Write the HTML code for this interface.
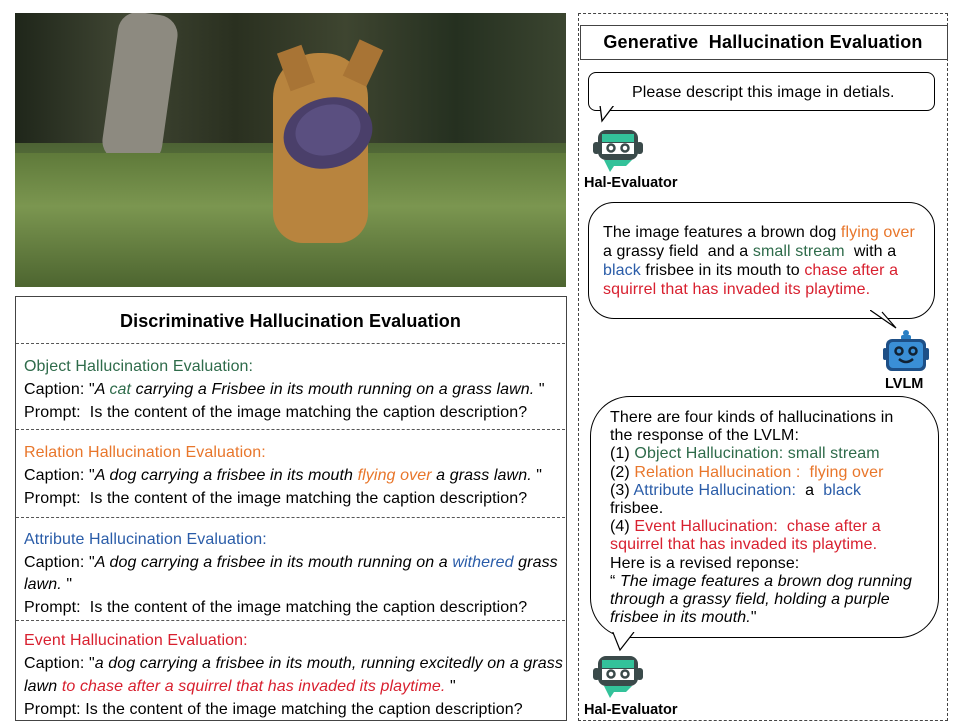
<!DOCTYPE html>
<html><head><meta charset="utf-8"><style>
body{margin:0;width:964px;height:728px;background:#fff;position:relative;font-family:"Liberation Sans",sans-serif;color:#000;overflow:hidden}
.a{position:absolute}
.t{font-size:16px;line-height:23px;white-space:nowrap;letter-spacing:0.1px}
.g{color:#2e6b4a}.o{color:#e8762b}.b{color:#2a5ca8}.r{color:#d8202f}
i{font-style:italic}
.dash{position:absolute;border-top:1px dashed #555}
.bub{position:absolute;border:1.3px solid #000;background:#fff}
.lab{position:absolute;font-weight:bold;font-size:14.5px}
</style></head><body>
<!-- photo -->
<div class="a" style="left:15px;top:13px;width:551px;height:274px;overflow:hidden;background:linear-gradient(180deg,#2d3322 0%,#3d4a2a 35%,#56703a 55%,#6f8a45 75%,#4a6030 100%)">
 <div class="a" style="left:0;top:0;width:551px;height:130px;background:linear-gradient(90deg,#1f261a,#404633 20%,#2a3020 40%,#3e4530 60%,#253020 80%,#3b4530)"></div>
 <div class="a" style="left:95px;top:0;width:60px;height:150px;background:#8d8a80;border-radius:20px;transform:rotate(8deg)"></div>
 <div class="a" style="left:0;top:140px;width:551px;height:134px;background:linear-gradient(180deg,#5f7a3a,#7b9650 40%,#4d6530)"></div>
 <div class="a" style="left:258px;top:40px;width:95px;height:190px;background:#b8843e;border-radius:45px 45px 30px 30px"></div>
 <div class="a" style="left:268px;top:35px;width:26px;height:40px;background:#a87435;transform:rotate(-20deg)"></div>
 <div class="a" style="left:335px;top:30px;width:26px;height:40px;background:#a87435;transform:rotate(25deg)"></div>
 <div class="a" style="left:268px;top:85px;width:90px;height:70px;background:#4a3f6a;border-radius:50%;transform:rotate(-15deg)"></div>
 <div class="a" style="left:280px;top:92px;width:66px;height:50px;background:#5a4f80;border-radius:50%;transform:rotate(-15deg)"></div>
</div>
<!-- left box -->
<div class="a" style="left:15px;top:296px;width:550px;height:423px;border:1px solid #444"></div>
<div class="a" style="left:15px;top:311px;width:551px;text-align:center;font-weight:bold;font-size:18px;letter-spacing:0.1px">Discriminative Hallucination Evaluation</div>
<div class="dash" style="left:16px;top:343px;width:549px"></div>
<div class="a t g" style="left:24px;top:355px">Object Hallucination Evaluation:</div>
<div class="a t" style="left:24px;top:378px">Caption: "<i>A <span class="g">cat</span> carrying a Frisbee in its mouth running on a grass lawn.</i> "</div>
<div class="a t" style="left:24px;top:401px">Prompt:&nbsp; Is the content of the image matching the caption description?</div>
<div class="dash" style="left:16px;top:429px;width:549px"></div>
<div class="a t o" style="left:24px;top:441px">Relation Hallucination Evaluation:</div>
<div class="a t" style="left:24px;top:464px">Caption: "<i>A dog carrying a frisbee in its mouth <span class="o">flying over</span> a grass lawn.</i> "</div>
<div class="a t" style="left:24px;top:487px">Prompt:&nbsp; Is the content of the image matching the caption description?</div>
<div class="dash" style="left:16px;top:517px;width:549px"></div>
<div class="a t b" style="left:24px;top:528px">Attribute Hallucination Evaluation:</div>
<div class="a t" style="left:24px;top:551px">Caption: "<i>A dog carrying a frisbee in its mouth running on a <span class="b">withered</span> grass</i></div>
<div class="a t" style="left:24px;top:573px"><i>lawn.</i> "</div>
<div class="a t" style="left:24px;top:596px">Prompt:&nbsp; Is the content of the image matching the caption description?</div>
<div class="dash" style="left:16px;top:620px;width:549px"></div>
<div class="a t r" style="left:24px;top:629px">Event Hallucination Evaluation:</div>
<div class="a t" style="left:24px;top:652px">Caption: "<i>a dog carrying a frisbee in its mouth, running excitedly on a grass</i></div>
<div class="a t" style="left:24px;top:675px"><i>lawn <span class="r">to chase after a squirrel that has invaded its playtime.</span></i> "</div>
<div class="a t" style="left:24px;top:698px">Prompt: Is the content of the image matching the caption description?</div>
<!-- right panel -->
<div class="a" style="left:578px;top:13px;width:368px;height:706px;border:1px dashed #444"></div>
<div class="a" style="left:580px;top:25px;width:366px;height:33px;border:1px solid #444"></div>
<div class="a" style="left:580px;top:32px;width:366px;text-align:center;font-weight:bold;font-size:18px;letter-spacing:0.2px">Generative&nbsp; Hallucination Evaluation</div>
<div class="bub" style="left:588px;top:72px;width:345px;height:37px;border-radius:8px"></div>
<svg class="a" style="left:598px;top:105px" width="20" height="20"><path d="M2 0 L4 16 L16 0" fill="#fff" stroke="#000" stroke-width="1.3"/><rect x="0" y="-2" width="20" height="3" fill="#fff"/></svg>
<div class="a t" style="left:632px;top:81px">Please descript this image in detials.</div>
<!-- hal icon -->
<svg class="a" style="left:590px;top:126px" width="56" height="48" viewBox="0 0 56 48">
 <rect x="8" y="4" width="40" height="30" rx="8" fill="#3a4a4a"/>
 <rect x="12" y="8" width="32" height="8" fill="#33c29a"/>
 <rect x="3" y="16" width="7" height="12" rx="3" fill="#3a4a4a"/><rect x="46" y="16" width="7" height="12" rx="3" fill="#3a4a4a"/>
 <rect x="12" y="17" width="32" height="11" fill="#fff"/>
 <circle cx="21" cy="22" r="3.5" fill="none" stroke="#3a4a4a" stroke-width="2.5"/><circle cx="35" cy="22" r="3.5" fill="none" stroke="#3a4a4a" stroke-width="2.5"/>
 <path d="M14 34 H42 L36 40 H24 L20 46 Z" fill="#33c29a"/>
</svg>
<div class="lab" style="left:584px;top:175px">Hal-Evaluator</div>
<div class="bub" style="left:588px;top:202px;width:345px;height:115px;border-radius:26px"></div>
<svg class="a" style="left:870px;top:310px" width="30" height="22"><path d="M0 0 L26 18 L12 2" fill="#fff" stroke="#000" stroke-width="1.2"/></svg>
<div class="a t" style="left:603px;top:223px;line-height:19px">The image features a brown dog <span class="o">flying over</span><br>a grassy field&nbsp; and a <span class="g">small stream</span>&nbsp; with a<br><span class="b">black</span> frisbee in its mouth to <span class="r">chase after a</span><br><span class="r">squirrel that has invaded its playtime.</span></div>
<svg class="a" style="left:882px;top:328px" width="48" height="46" viewBox="0 0 48 46">
 <circle cx="24" cy="5" r="3" fill="#2a7fc4"/><rect x="19" y="7" width="10" height="5" rx="2" fill="#2a7fc4"/>
 <rect x="4" y="11" width="40" height="32" rx="6" fill="#1d4f86"/><rect x="7" y="14" width="34" height="26" rx="4" fill="#3a8fd6"/>
 <rect x="1" y="20" width="4" height="12" rx="2" fill="#1d4f86"/><rect x="43" y="20" width="4" height="12" rx="2" fill="#1d4f86"/>
 <circle cx="17" cy="23" r="3.5" fill="none" stroke="#123" stroke-width="2.5"/><circle cx="31" cy="23" r="3.5" fill="none" stroke="#123" stroke-width="2.5"/>
 <path d="M17 31 Q24 37 31 31" fill="none" stroke="#123" stroke-width="2.5"/>
</svg>
<div class="lab" style="left:885px;top:376px">LVLM</div>
<div class="bub" style="left:590px;top:396px;width:347px;height:240px;border-radius:40px"></div>
<svg class="a" style="left:612px;top:628px" width="24" height="24"><path d="M0 2 L8 22 L22 4" fill="#fff" stroke="#000" stroke-width="1.2"/><rect x="0" y="-2" width="24" height="6" fill="#fff"/></svg>
<div class="a t" style="left:610px;top:409px;line-height:18.2px">There are four kinds of hallucinations in<br>the response of the LVLM:<br>(1) <span class="g">Object Hallucination: small stream</span><br>(2) <span class="o">Relation Hallucination :&nbsp; flying over</span><br>(3) <span class="b">Attribute Hallucination:</span>&nbsp; a&nbsp; <span class="b">black</span><br>frisbee.<br>(4) <span class="r">Event Hallucination:&nbsp; chase after a</span><br><span class="r">squirrel that has invaded its playtime.</span><br>Here is a revised reponse:<br>“ <i>The image features a brown dog running<br>through a grassy field, holding a purple<br>frisbee in its mouth.</i>"</div>
<svg class="a" style="left:590px;top:652px" width="56" height="48" viewBox="0 0 56 48">
 <rect x="8" y="4" width="40" height="30" rx="8" fill="#3a4a4a"/>
 <rect x="12" y="8" width="32" height="8" fill="#33c29a"/>
 <rect x="3" y="16" width="7" height="12" rx="3" fill="#3a4a4a"/><rect x="46" y="16" width="7" height="12" rx="3" fill="#3a4a4a"/>
 <rect x="12" y="17" width="32" height="11" fill="#fff"/>
 <circle cx="21" cy="22" r="3.5" fill="none" stroke="#3a4a4a" stroke-width="2.5"/><circle cx="35" cy="22" r="3.5" fill="none" stroke="#3a4a4a" stroke-width="2.5"/>
 <path d="M14 34 H42 L36 40 H24 L20 46 Z" fill="#33c29a"/>
</svg>
<div class="lab" style="left:584px;top:702px">Hal-Evaluator</div>
</body></html>
